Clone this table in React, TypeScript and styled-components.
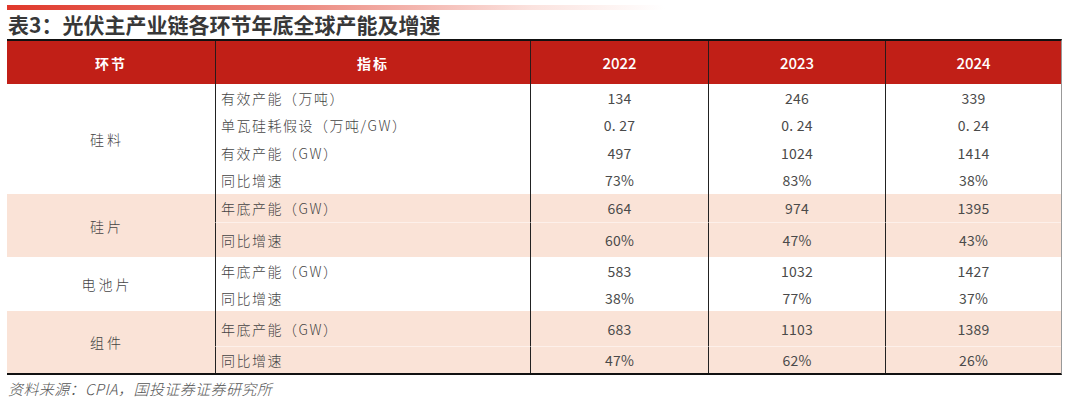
import React from 'react';
import styled, { createGlobalStyle } from 'styled-components';

const GlobalStyle = createGlobalStyle`
  html, body {
    margin: 0;
    padding: 0;
    background: #fff;
  }

  body {
    font-family: "Noto Sans CJK SC", "Noto Sans", sans-serif;
    color: #444;
  }
`;

const COLS = '208px 315px 178px 177px 176px';

const Page = styled.div`
  width: 1069px;
  padding: 5px 0 0 7px;
  box-sizing: border-box;
`;

const AccentBar = styled.div`
  width: 658px;
  height: 5px;
  background: linear-gradient(to right, #e0382b 0%, #ec8a80 45%, #fbe3df 80%, rgba(255, 255, 255, 0) 100%);
`;

const Title = styled.h1`
  margin: 0;
  padding-left: 1px;
  height: 29px;
  line-height: 29px;
  font-size: 21px;
  font-weight: 700;
  color: #383838;
  letter-spacing: 0;
`;

const Table = styled.div`
  width: 1054px;
  border-top: 2px solid #111;
  border-bottom: 2px solid #111;
  border-right: 1px solid #999;
  box-sizing: content-box;
`;

const HeaderRow = styled.div`
  display: grid;
  grid-template-columns: ${COLS};
  height: 43px;
  background: #c11f17;
`;

const HeaderCell = styled.div<{ $num?: boolean; $first?: boolean }>`
  display: flex;
  align-items: center;
  justify-content: center;
  color: #fff;
  font-weight: ${(p) => (p.$num ? 500 : 700)};
  font-size: ${(p) => (p.$num ? '15px' : '14px')};
  letter-spacing: ${(p) => (p.$num ? '0' : '2px')};
  border-left: ${(p) => (p.$first ? 'none' : '1px solid #2a1a1a')};
`;

const Group = styled.div<{ $tint?: boolean }>`
  display: grid;
  grid-template-columns: ${COLS};
  background: ${(p) => (p.$tint ? '#fae3d7' : '#fff')};
`;

const Category = styled.div<{ $span: number }>`
  grid-column: 1;
  grid-row: 1 / span ${(p) => p.$span};
  display: flex;
  align-items: center;
  justify-content: center;
  font-size: 14px;
  font-weight: 300;
  letter-spacing: 3px;
  padding-right: 8px;
`;

const Cell = styled.div<{ $h: number; $label?: boolean; $split?: boolean; $tint?: boolean }>`
  height: ${(p) => p.$h}px;
  display: flex;
  align-items: center;
  justify-content: ${(p) => (p.$label ? 'flex-start' : 'center')};
  padding-left: ${(p) => (p.$label ? '5px' : '0')};
  font-size: 14px;
  font-weight: ${(p) => (p.$label ? 300 : 400)};
  color: ${(p) => (p.$label ? '#444' : '#4a4a4a')};
  letter-spacing: ${(p) => (p.$label ? '1.5px' : '0.2px')};
  border-left: 1px solid #222;
  border-top: ${(p) => (p.$split ? `1px solid ${p.$tint ? '#fdf0ea' : '#fff'}` : 'none')};
  box-sizing: border-box;
`;

const Source = styled.p`
  margin: 4px 0 0 1px;
  line-height: 20px;
  font-size: 15px;
  font-style: italic;
  font-weight: 300;
  color: #555;
  letter-spacing: 0.4px;
`;

type Row = { label: string; values: string[]; h: number };
type Section = { name: string; tint: boolean; rows: Row[] };

const sections: Section[] = [
  {
    name: '硅料',
    tint: false,
    rows: [
      { label: '有效产能（万吨）', values: ['134', '246', '339'], h: 27 },
      { label: '单瓦硅耗假设（万吨/GW）', values: ['0. 27', '0. 24', '0. 24'], h: 28 },
      { label: '有效产能（GW）', values: ['497', '1024', '1414'], h: 27 },
      { label: '同比增速', values: ['73%', '83%', '38%'], h: 28 },
    ],
  },
  {
    name: '硅片',
    tint: true,
    rows: [
      { label: '年底产能（GW）', values: ['664', '974', '1395'], h: 28 },
      { label: '同比增速', values: ['60%', '47%', '43%'], h: 35 },
    ],
  },
  {
    name: '电池片',
    tint: false,
    rows: [
      { label: '年底产能（GW）', values: ['583', '1032', '1427'], h: 27 },
      { label: '同比增速', values: ['38%', '77%', '37%'], h: 27 },
    ],
  },
  {
    name: '组件',
    tint: true,
    rows: [
      { label: '年底产能（GW）', values: ['683', '1103', '1389'], h: 35 },
      { label: '同比增速', values: ['47%', '62%', '26%'], h: 27 },
    ],
  },
];

const App = () => (
  <Page>
    <GlobalStyle />
    <AccentBar />
    <Title>表3：光伏主产业链各环节年底全球产能及增速</Title>
    <Table>
      <HeaderRow>
        <HeaderCell $first>环节</HeaderCell>
        <HeaderCell>指标</HeaderCell>
        <HeaderCell $num>2022</HeaderCell>
        <HeaderCell $num>2023</HeaderCell>
        <HeaderCell $num>2024</HeaderCell>
      </HeaderRow>
      {sections.map((s) => (
        <Group key={s.name} $tint={s.tint}>
          <Category $span={s.rows.length}>{s.name}</Category>
          {s.rows.map((r, i) => (
            <React.Fragment key={r.label + i}>
              <Cell $h={r.h} $label $split={i > 0 && s.tint} $tint={s.tint}>
                {r.label}
              </Cell>
              {r.values.map((v, j) => (
                <Cell key={j} $h={r.h} $split={i > 0 && s.tint} $tint={s.tint}>
                  {v}
                </Cell>
              ))}
            </React.Fragment>
          ))}
        </Group>
      ))}
    </Table>
    <Source>资料来源：CPIA，国投证券证券研究所</Source>
  </Page>
);

export default App;
